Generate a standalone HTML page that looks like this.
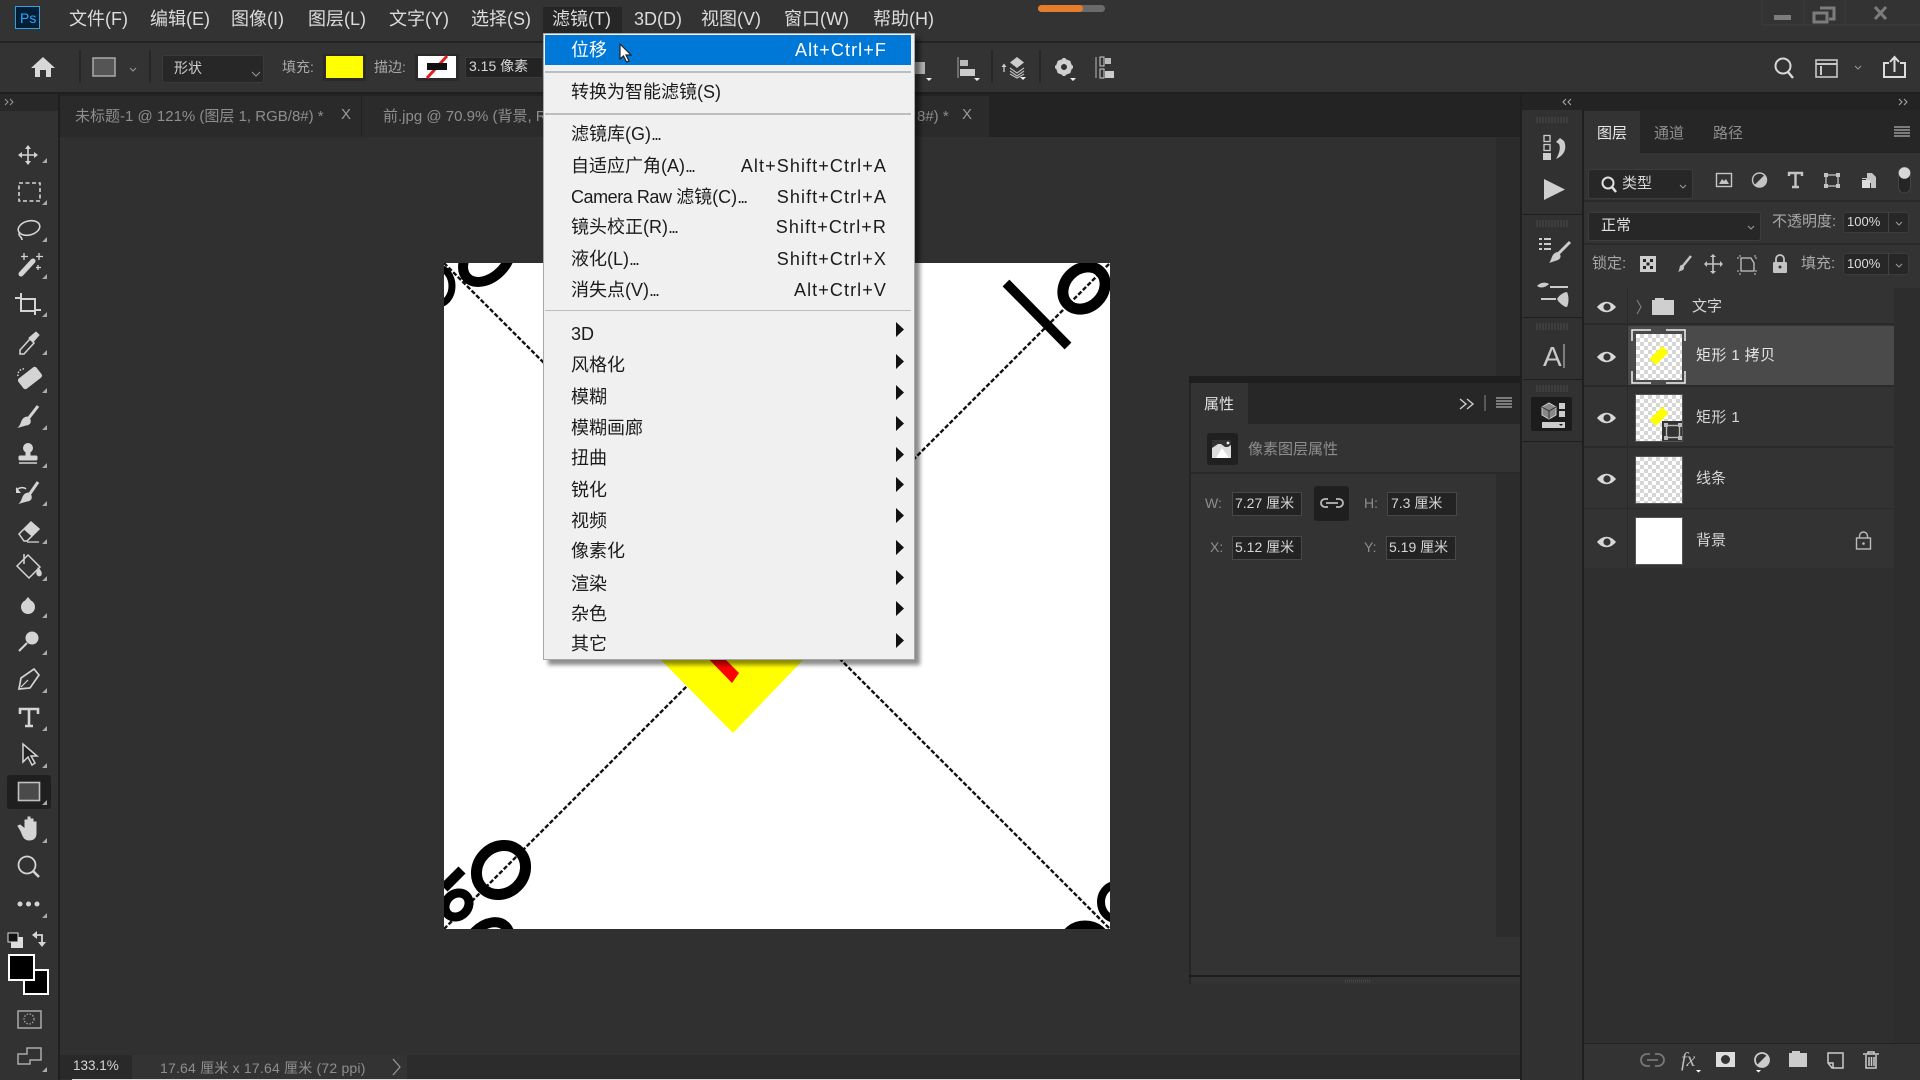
<!DOCTYPE html>
<html lang="zh"><head><meta charset="utf-8"><title>Photoshop</title>
<style>
html,body{margin:0;padding:0;width:1920px;height:1080px;overflow:hidden;background:#303030}
body{position:relative;font-family:"Liberation Sans","Noto Sans CJK SC",sans-serif}
.b,.t,svg{position:absolute}
.t{white-space:nowrap;line-height:24px;height:24px;color:#d6d6d6;font-size:15px}
.t i{font-style:normal;letter-spacing:-2px}
.m{font-size:18px;top:7px;color:#dcdcdc}
.mi{font-size:18px;color:#1b1b1b;left:571px}
.sc{font-size:18px;color:#1b1b1b;right:1033px;letter-spacing:1.1px}
.g{color:#8e8e8e}
.ck{background:repeating-conic-gradient(#d6d6d6 0 25%,#fff 0 50%) 0 0/8px 8px}
.f{background:#232323;border:1px solid #484848;box-sizing:border-box}
.d{background:#272727;border:1px solid #3c3c3c;box-sizing:border-box;border-radius:3px}
</style></head><body>
<!-- base -->
<div class="b" style="left:0;top:0;width:1920px;height:41px;background:#333"></div>
<div class="b" style="left:0;top:41px;width:1920px;height:2px;background:#232323"></div>
<div class="b" style="left:0;top:43px;width:1920px;height:49px;background:#333"></div>
<div class="b" style="left:0;top:92px;width:1920px;height:2px;background:#1f1f1f"></div>
<div class="b" style="left:0;top:94px;width:58px;height:986px;background:#323232"></div>
<div class="b" style="left:0;top:94px;width:58px;height:17px;background:#282828"></div>
<div class="b" style="left:58px;top:94px;width:2px;height:986px;background:#1f1f1f"></div>
<div class="b" style="left:7px;top:775px;width:44px;height:34px;background:#1f1f1f;border-radius:3px"></div>
<!-- tabs -->
<div class="b" style="left:60px;top:94px;width:1460px;height:43px;background:#232323"></div>
<div class="b" style="left:60px;top:96px;width:301px;height:41px;background:#2a2a2a"></div>
<div class="b" style="left:362px;top:96px;width:627px;height:41px;background:#2b2b2b"></div>
<div class="b" style="left:1496px;top:137px;width:24px;height:239px;background:#2b2b2b"></div>
<!-- status bar -->
<div class="b" style="left:60px;top:1055px;width:1460px;height:24px;background:#2c2c2c"></div>
<div class="b" style="left:60px;top:1055px;width:72px;height:24px;background:#292929"></div>
<div class="b" style="left:132px;top:1055px;width:275px;height:24px;background:#333"></div>
<div class="b" style="left:72px;top:1079px;width:1848px;height:1px;background:#ddd"></div>
<span class="t" style="left:73px;top:1054px;font-size:13.500px">133.1%</span>
<span class="t g" style="left:160px;top:1056px;font-size:14px;letter-spacing:.2px">17.64 厘米 x 17.64 厘米 (72 ppi)</span>
<svg style="left:390px;top:1056px" width="14" height="22"><path d="M3 3l7 8-7 8" fill="none" stroke="#999" stroke-width="1.2"/></svg>

<!-- canvas -->
<svg style="left:444px;top:263px" width="666" height="666" viewBox="444 263 666 666">
<rect x="444" y="263" width="666" height="666" fill="#fff"/>
<path d="M444 263L1110 929M444 929L1110 263" stroke="#111" stroke-width="2.4" stroke-dasharray="4.500 2" fill="none"/>
<polygon points="660,659 733,733 804,659 733,590" fill="#ff0"/>
<polygon points="699,649 715,649 739,673 732,683" fill="#f00"/>
<line x1="1006" y1="283" x2="1068" y2="346" stroke="#000" stroke-width="9.500"/>
<ellipse cx="1084" cy="288" rx="23" ry="19" transform="rotate(-45 1084 288)" fill="none" stroke="#000" stroke-width="11"/>
<ellipse cx="501" cy="870" rx="26" ry="23" transform="rotate(-45 501 870)" fill="none" stroke="#000" stroke-width="11"/>
<ellipse cx="457" cy="905" rx="13" ry="11" transform="rotate(-45 457 905)" fill="none" stroke="#000" stroke-width="9"/>
<path d="M444 888L462 870" stroke="#000" stroke-width="10"/>
<ellipse cx="488" cy="944" rx="25" ry="18" transform="rotate(-45 488 944)" fill="none" stroke="#000" stroke-width="10"/>
<ellipse cx="487" cy="258" rx="28" ry="19" transform="rotate(-45 487 258)" fill="none" stroke="#000" stroke-width="10"/>
<ellipse cx="438" cy="286" rx="14" ry="18" fill="none" stroke="#000" stroke-width="7"/>
<ellipse cx="1116" cy="902" rx="15" ry="17" fill="none" stroke="#000" stroke-width="8"/>
<ellipse cx="1085" cy="942" rx="21" ry="17" fill="none" stroke="#000" stroke-width="9"/>
</svg>

<!-- properties panel -->
<div class="b" style="left:1189px;top:376px;width:333px;height:608px;background:#333;border-left:2px solid #252525;box-sizing:border-box"></div>
<div class="b" style="left:1189px;top:376px;width:333px;height:7px;background:#1e1e1e"></div>
<div class="b" style="left:1191px;top:383px;width:330px;height:41px;background:#272727"></div>
<div class="b" style="left:1191px;top:383px;width:57px;height:41px;background:#333"></div>
<span class="t" style="left:1204px;top:393px;color:#e4e4e4">属性</span>
<div class="b" style="left:1207px;top:433px;width:31px;height:32px;background:#202020;border-radius:3px"></div>
<span class="t g" style="left:1248px;top:438px">像素图层属性</span>
<div class="b" style="left:1191px;top:472px;width:330px;height:2px;background:#282828"></div>
<div class="b" style="left:1496px;top:474px;width:25px;height:463px;background:#2c2c2c"></div>
<div class="b" style="left:1189px;top:975px;width:333px;height:2px;background:#1d1d1d"></div>
<span class="t g" style="left:1205px;top:491px;font-size:14px">W:</span>
<div class="b f" style="left:1232px;top:492px;width:70px;height:24px"></div>
<span class="t" style="left:1235px;top:491px;font-size:14px">7.27 厘米</span>
<div class="b" style="left:1314px;top:486px;width:35px;height:35px;background:#1f1f1f;border-radius:3px"></div>
<span class="t g" style="left:1364px;top:491px;font-size:14px">H:</span>
<div class="b f" style="left:1387px;top:492px;width:70px;height:24px"></div>
<span class="t" style="left:1391px;top:491px;font-size:14px">7.3 厘米</span>
<span class="t g" style="left:1210px;top:535px;font-size:14px">X:</span>
<div class="b f" style="left:1232px;top:536px;width:70px;height:24px"></div>
<span class="t" style="left:1235px;top:535px;font-size:14px">5.12 厘米</span>
<span class="t g" style="left:1364px;top:535px;font-size:14px">Y:</span>
<div class="b f" style="left:1386px;top:536px;width:70px;height:24px"></div>
<span class="t" style="left:1389px;top:535px;font-size:14px">5.19 厘米</span>

<!-- right icon column -->
<div class="b" style="left:1522px;top:110px;width:60px;height:970px;background:#313131"></div>
<div class="b" style="left:1520px;top:94px;width:2px;height:986px;background:#1f1f1f"></div>
<div class="b" style="left:1522px;top:94px;width:398px;height:16px;background:#232323"></div>
<div class="b" style="left:1582px;top:110px;width:2px;height:970px;background:#1f1f1f"></div>
<div class="b" style="left:1523px;top:214px;width:59px;height:1px;background:#1f1f1f"></div>
<div class="b" style="left:1523px;top:317px;width:59px;height:1px;background:#1f1f1f"></div>
<div class="b" style="left:1523px;top:379px;width:59px;height:1px;background:#1f1f1f"></div>
<div class="b" style="left:1523px;top:441px;width:59px;height:1px;background:#1f1f1f"></div>
<div class="b" style="left:1531px;top:397px;width:41px;height:34px;background:#1c1c1c;border-radius:2px"></div>

<!-- layers panel -->
<div class="b" style="left:1584px;top:110px;width:336px;height:970px;background:#333"></div>
<div class="b" style="left:1584px;top:110px;width:336px;height:43px;background:#262626"></div>
<div class="b" style="left:1584px;top:111px;width:56px;height:42px;background:#333"></div>
<span class="t" style="left:1597px;top:122px;color:#e8e8e8">图层</span>
<span class="t g" style="left:1654px;top:122px">通道</span>
<span class="t g" style="left:1713px;top:122px">路径</span>
<div class="b d" style="left:1588px;top:169px;width:105px;height:30px"></div>
<span class="t" style="left:1622px;top:172px">类型</span>
<div class="b" style="left:1584px;top:200px;width:336px;height:2px;background:#2a2a2a"></div>
<div class="b d" style="left:1588px;top:212px;width:173px;height:29px"></div>
<span class="t" style="left:1601px;top:214px;color:#e0e0e0">正常</span>
<span class="t" style="left:1772px;top:210px;color:#a8a8a8">不透明度:</span>
<div class="b d" style="left:1843px;top:212px;width:66px;height:21px"></div>
<div class="b" style="left:1888px;top:212px;width:1px;height:21px;background:#444"></div>
<span class="t" style="left:1847px;top:210px;font-size:13px;color:#dcdcdc">100%</span>
<div class="b" style="left:1584px;top:243px;width:336px;height:2px;background:#2a2a2a"></div>
<span class="t" style="left:1592px;top:252px;color:#a8a8a8">锁定:</span>
<span class="t" style="left:1801px;top:252px;color:#a8a8a8">填充:</span>
<div class="b d" style="left:1843px;top:253px;width:66px;height:22px"></div>
<div class="b" style="left:1888px;top:253px;width:1px;height:22px;background:#444"></div>
<span class="t" style="left:1847px;top:252px;font-size:13px;color:#dcdcdc">100%</span>

<div class="b" style="left:1894px;top:288px;width:26px;height:755px;background:#2d2d2d"></div>
<div class="b" style="left:1584px;top:568px;width:310px;height:475px;background:#2f2f2f"></div>
<div class="b" style="left:1584px;top:1043px;width:336px;height:1px;background:#232323"></div>
<div class="b" style="left:1627px;top:288px;width:1px;height:280px;background:#292929"></div>
<div class="b" style="left:1584px;top:323px;width:310px;height:2px;background:#2a2a2a"></div>
<div class="b" style="left:1628px;top:326px;width:266px;height:59px;background:#4a4a4a"></div>
<div class="b" style="left:1584px;top:385px;width:310px;height:2px;background:#2a2a2a"></div>
<div class="b" style="left:1584px;top:446px;width:310px;height:2px;background:#2a2a2a"></div>
<div class="b" style="left:1584px;top:508px;width:310px;height:1px;background:#2a2a2a"></div>

<span class="t" style="left:1692px;top:295px">文字</span>
<div class="b ck" style="left:1636px;top:334px;width:46px;height:46px"></div>
<div class="b ck" style="left:1636px;top:395px;width:46px;height:46px;outline:1px solid #555"></div>
<div class="b ck" style="left:1636px;top:457px;width:46px;height:46px;outline:1px solid #555"></div>
<div class="b" style="left:1636px;top:518px;width:46px;height:46px;background:#fff;outline:1px solid #555"></div>
<div class="b" style="left:1650px;top:351px;width:18px;height:9px;background:#ff0;transform:rotate(-45deg)"></div>
<div class="b" style="left:1650px;top:412px;width:18px;height:9px;background:#ff0;transform:rotate(-45deg)"></div>
<div class="b" style="left:1662px;top:421px;width:20px;height:20px;background:#333"></div>
<span class="t" style="left:1696px;top:344px;color:#e4e4e4;letter-spacing:.4px">矩形 1 拷贝</span>
<span class="t" style="left:1696px;top:406px;letter-spacing:.4px">矩形 1</span>
<span class="t" style="left:1696px;top:467px">线条</span>
<span class="t" style="left:1696px;top:529px">背景</span>

<!-- menu bar text -->
<div class="b" style="left:543px;top:7px;width:79px;height:26px;background:#262626"></div>
<span class="t m" style="left:69px">文件(F)</span>
<span class="t m" style="left:150px">编辑(E)</span>
<span class="t m" style="left:231px">图像(I)</span>
<span class="t m" style="left:308px">图层(L)</span>
<span class="t m" style="left:389px">文字(Y)</span>
<span class="t m" style="left:471px">选择(S)</span>
<span class="t m" style="left:552px">滤镜(T)</span>
<span class="t m" style="left:634px">3D(D)</span>
<span class="t m" style="left:701px">视图(V)</span>
<span class="t m" style="left:784px">窗口(W)</span>
<span class="t m" style="left:873px">帮助(H)</span>

<!-- progress pill -->
<div class="b" style="left:1038px;top:5px;width:67px;height:7px;background:#6a6a6a;border-radius:4px"></div>
<div class="b" style="left:1038px;top:5px;width:45px;height:7px;background:#e57e2c;border-radius:4px"></div>

<!-- Ps logo -->
<div class="b" style="left:15px;top:6px;width:25px;height:23px;background:#001e36;border:1.500px solid #2fa3e0;box-sizing:border-box"></div>
<span class="t" style="left:20px;top:6px;font-size:14px;color:#31a8ff;letter-spacing:0">Ps</span>

<!-- options bar -->
<div class="b" style="left:162px;top:55px;width:102px;height:28px;background:#272727;border-radius:3px;border:1px solid #3a3a3a;box-sizing:border-box"></div>
<span class="t" style="left:174px;top:56px;font-size:14px;color:#cfcfcf">形状</span>
<span class="t" style="left:282px;top:55px;color:#a8a8a8;font-size:14px">填充:</span>
<div class="b" style="left:323px;top:54px;width:43px;height:27px;background:#2a2a2a"></div>
<div class="b" style="left:326px;top:56px;width:37px;height:22px;background:#ff0"></div>
<span class="t" style="left:374px;top:55px;color:#a8a8a8;font-size:14px">描边:</span>
<div class="b" style="left:415px;top:54px;width:44px;height:27px;background:#2a2a2a"></div>
<div class="b" style="left:418px;top:56px;width:38px;height:22px;background:#fff"></div>
<div class="b f" style="left:465px;top:57px;width:78px;height:21px;border-color:#3a3a3a"></div>
<span class="t" style="left:469px;top:54px;font-size:14px;color:#d8d8d8">3.15 像素</span>

<!-- tab text -->
<span class="t g" style="left:75px;top:105px;font-size:15px">未标题-1 @ 121% (图层 1, RGB/8#) *</span>
<span class="t" style="left:341px;top:103px;font-size:15px;color:#9a9a9a">X</span>
<span class="t g" style="left:383px;top:105px;font-size:15px">前.jpg @ 70.9% (背景, R</span>
<span class="t g" style="left:917px;top:105px;font-size:15px">8#) *</span>
<span class="t" style="left:962px;top:103px;font-size:15px;color:#9a9a9a">X</span>

<!-- ICONS -->
<svg style="left:0;top:0" width="1920" height="1080" viewBox="0 0 1920 1080" fill="none">
<!-- window controls -->
<path d="M1762 25H1920M1762 0V25M1804 0V25M1845 0V25" stroke="#3c3c3c"/>
<rect x="1774" y="15" width="17" height="5" fill="#7c7c7c"/>
<path d="M1820 8h14v11h-5M1814 13h13v9h-13z" stroke="#7c7c7c" stroke-width="3"/>
<path d="M1875 7l11 12M1886 7l-11 12" stroke="#7c7c7c" stroke-width="3"/>
<!-- top-left chevrons -->
<path d="M5 99l3 3-3 3M10 99l3 3-3 3" stroke="#999"/>
<path d="M1566 99l-3 3 3 3M1571 99l-3 3 3 3M1899 99l3 3-3 3M1904 99l3 3-3 3" stroke="#aaa"/>
<!-- options bar separators -->
<path d="M80 50V83M150 50V83M992 50V83M1040 50V83" stroke="#272727" stroke-width="2"/>
<path d="M43 57L31 68h4v9h5v-7h6v7h5v-9h4z" fill="#d8d8d8"/>
<rect x="93" y="58" width="22" height="18" fill="#555" stroke="#aaa" stroke-width="1.500"/>
<path d="M130 68l3 3 3-3M252 72l4 4 4-4" stroke="#999"/>
<path d="M427 78L447 56" stroke="#d22" stroke-width="3"/>
<rect x="427" y="63" width="20" height="7" fill="#111"/>
<rect x="912" y="62" width="13" height="12" fill="#b0b0b0"/>
<path d="M926 78h6l-3 3z" fill="#eee"/>
<path d="M958 57v21" stroke="#aaa"/>
<rect x="960" y="60" width="8" height="6" fill="#bbb"/>
<rect x="960" y="69" width="15" height="7" fill="#ccc"/>
<path d="M974 78h6l-3 3zM1020 77h6l-3 3zM1070 78h6l-3 3z" fill="#eee"/>
<path d="M1017 57l7 5.500-7 5.500-7-5.500z" fill="#ccc"/>
<path d="M1010 68l7 5 7-5M1010 71l7 5 7-5M1010 74l7 4 7-4" stroke="#bbb" stroke-width="1.200"/>
<path d="M1004 72v-7" stroke="#ccc" stroke-width="1.300"/><path d="M1001.500 67l2.500-3.500 2.500 3.500z" fill="#ccc"/>
<circle cx="1064" cy="67" r="5.500" stroke="#d0d0d0" stroke-width="5"/>
<path d="M1064 58v4M1064 72v4M1055 67h4M1069 67h4M1058 61l2.500 2.500M1067.500 70.500l2.500 2.500M1070 61l-2.500 2.500M1060.500 70.500l-2.500 2.500" stroke="#d0d0d0" stroke-width="3"/>
<path d="M1096 57v21" stroke="#bbb"/>
<rect x="1100" y="57" width="4" height="9" stroke="#ccc"/><rect x="1100" y="69" width="4" height="9" stroke="#ccc"/>
<rect x="1105" y="58" width="6" height="6" fill="#bbb"/><rect x="1105" y="71" width="9" height="7" fill="#ccc"/>
<circle cx="1783" cy="66" r="7.500" stroke="#d8d8d8" stroke-width="2"/><path d="M1788 72l5 6" stroke="#d8d8d8" stroke-width="2.400"/>
<rect x="1816" y="60" width="21" height="17" stroke="#c8c8c8" stroke-width="1.600"/><path d="M1816 64h21" stroke="#c8c8c8" stroke-width="2"/><path d="M1821 66v9" stroke="#c8c8c8" stroke-width="2"/>
<path d="M1855 66l3 3 3-3" stroke="#999"/>
<path d="M1889 63h-5v14h21V63h-5M1894.500 72V58M1890 62l4.500-5 4.500 5" stroke="#dcdcdc" stroke-width="2"/>

<!-- tools -->
<g stroke="#d4d4d4" fill="#d4d4d4">
<path d="M28 146v18M19 155h18" stroke-width="1.600"/>
<path d="M28 145l-3 4h6zM28 165l-3-4h6zM18 155l4-3v6zM38 155l-4-3v6z" stroke="none"/>
<rect x="19" y="183" width="21" height="18" fill="none" stroke-width="1.600" stroke-dasharray="4 2.500"/>
<ellipse cx="29" cy="228" rx="11" ry="7" transform="rotate(-15 29 228)" fill="none" stroke-width="1.600"/>
<path d="M20 232c-3 4 2 4 2 8" fill="none" stroke-width="1.600"/>
<path d="M21 274L33 261" stroke-width="5" stroke-linecap="round"/>
<path d="M24 253v7M21 256.500h7M39 253v7M36 256.500h7M38 265v5M36 267.500h5" stroke-width="1.300"/>
<path d="M15 298h6M21 293v18h14M21 299h14v16M35 310h6" fill="none" stroke-width="2"/>
<path d="M20 350l10-11 4 4-10 11h-4z" fill="none" stroke-width="1.500"/>
<path d="M29 338l7-6 3 3-6 7z"/>
<rect x="19" y="372" width="22" height="12" rx="2" transform="rotate(-38 30 378)"/>
<path d="M18 376a6 6 0 0 1 7-7" fill="none" stroke-width="1.500" stroke-dasharray="1.500 1.500"/>
<path d="M38 406L28 419" stroke-width="3" /><path d="M27 417c5 2 4 8-1 8l-7 2c3-3 2-9 8-10z"/>
<circle cx="28" cy="448" r="4.500"/><rect x="26" y="451" width="4" height="5"/><rect x="19" y="456" width="18" height="4" rx="1"/><path d="M19 463h18" stroke-width="1.500"/>
<path d="M38 482L29 495" stroke-width="3"/><path d="M28 493c5 2 4 8-1 8l-7 2c3-3 2-9 8-10z"/><path d="M16 490c4-3 8-3 10-1" fill="none" stroke-width="1.500"/><path d="M16 487v6h5z" stroke="none"/>
<path d="M19 534l12-12 8 7-12 12h-3z" fill="none" stroke-width="1.500"/><path d="M24 529l7-7 8 7-7 7z"/><path d="M27 542h12" stroke-width="1.300"/>
<g transform="translate(0 5)"><path d="M17 561l11-11 12 12-11 11z" fill="none" stroke-width="1.500"/><path d="M24 549v10" stroke-width="1.500"/><path d="M38 563c3 3 4 5 3 7-2 2-5 0-4-3z"/></g>
<path d="M28 600c-4 0-7 3-7 7a7 7 0 0 0 14 0c0-4-3-7-7-7z" stroke="none"/>
<path d="M28 597l-5 6h10z" stroke="none"/>
<circle cx="32" cy="638" r="6.500" stroke="none"/><path d="M27 643l-8 8" stroke-width="2" />
<path d="M19 689l2-11 13-9 5 6-9 13z" fill="none" stroke-width="1.700"/><path d="M21 687l7-7" stroke-width="1.200"/>
<path d="M20 714v-5h18v5M29 709v17M25 726h8" fill="none" stroke-width="2.600"/>
<path d="M23 744v18l5-5 4 8 3-2-4-7h6z" fill="#222" stroke-width="1.500"/>
<rect x="18.500" y="782.500" width="21" height="18" fill="#4a4a4a" stroke="#c0c0c0" stroke-width="1.600"/>
<path d="M21 831l-3-5 2-1 5 4v-9h2v7h1v-10h2v10h1v-8h2v9h1v-6h2v11c0 5-3 7-7 7-5 0-6-4-8-9z"/>
<circle cx="27" cy="865" r="8.500" fill="none" stroke-width="1.800"/><path d="M33 871l6 6" stroke-width="2.600"/>
<circle cx="20" cy="904" r="2.500" stroke="none"/><circle cx="28.500" cy="904" r="2.500" stroke="none"/><circle cx="37" cy="904" r="2.500" stroke="none"/>
<path d="M33 935h9v8" fill="none" stroke-width="1.800"/><path d="M37 931l-5 4 5 4zM38 942l4 5 4-5z" stroke="none"/>
<rect x="18" y="1011" width="23" height="17" fill="none" stroke="#aaa" stroke-width="1.500"/><circle cx="29" cy="1019" r="5" fill="none" stroke="#aaa" stroke-dasharray="1.500 1.500" stroke-width="1.200"/>
<path d="M18 1054h9v-6h14v12h-11v4H18z" fill="none" stroke="#aaa" stroke-width="1.500"/>
</g>
<!-- tool corner marks -->
<path d="M47 163v-5l-5 5zM47 205v-5l-5 5zM47 242v-5l-5 5zM47 279v-5l-5 5zM47 317v-5l-5 5zM47 355v-5l-5 5zM47 393v-5l-5 5zM47 430v-5l-5 5zM47 468v-5l-5 5zM47 506v-5l-5 5zM47 544v-5l-5 5zM47 581v-5l-5 5zM47 618v-5l-5 5zM47 655v-5l-5 5zM47 693v-5l-5 5zM47 731v-5l-5 5zM47 768v-5l-5 5zM47 805v-5l-5 5zM47 843v-5l-5 5zM47 918v-5l-5 5zM47 1072v-5l-5 5z" fill="#aaa"/>
<!-- swatches -->
<rect x="11" y="937" width="12" height="11" fill="#ddd"/>
<rect x="8" y="933" width="10" height="9" fill="#111" stroke="#ddd"/>
<rect x="24" y="970" width="24" height="24" fill="#000" stroke="#fff" stroke-width="2"/>
<rect x="9" y="955" width="25" height="25" fill="#000" stroke="#fff" stroke-width="2"/>

<!-- right column icons -->
<g stroke="#4a4a4a"><path d="M1537 117v6M1540 117v6M1543 117v6M1546 117v6M1549 117v6M1552 117v6M1555 117v6M1558 117v6M1561 117v6M1564 117v6M1567 117v6M1537 220v7M1540 220v7M1543 220v7M1546 220v7M1549 220v7M1552 220v7M1555 220v7M1558 220v7M1561 220v7M1564 220v7M1567 220v7M1537 323v7M1540 323v7M1543 323v7M1546 323v7M1549 323v7M1552 323v7M1555 323v7M1558 323v7M1561 323v7M1564 323v7M1567 323v7M1537 385v7M1540 385v7M1543 385v7M1546 385v7M1549 385v7M1552 385v7M1555 385v7M1558 385v7M1561 385v7M1564 385v7M1567 385v7"/></g>
<rect x="1544" y="135.500" width="6" height="6" stroke="#ccc" stroke-width="1.300"/><rect x="1544" y="144.500" width="6" height="6" stroke="#ccc" stroke-width="1.300"/><rect x="1543" y="153" width="8" height="7" fill="#ccc"/>
<path d="M1556 142l4-4 4 3c3 7 1 14-8 18 3-5 5-11 3-15z" fill="#ccc"/>
<path d="M1544 179v21l21-10.500z" fill="#cfcfcf"/>
<path d="M1539 239h3M1539 244h3M1539 249h3M1544 239h7M1544 244h7M1544 249h7" stroke="#ccc" stroke-width="2"/>
<path d="M1570 242l-12 12" stroke="#ccc" stroke-width="3"/><path d="M1557 252c4 1 5 6 1 8l-9 3c3-3 2-9 8-11z" fill="#ccc"/>
<path d="M1537 286c4-4 9-4 12-2h1l-1 0c-3 3-8 5-12 2z" fill="#ccc"/><path d="M1550 287h18M1541 299h15" stroke="#ccc" stroke-width="2"/><path d="M1557 299c3-5 8-7 10-7 2 4 2 11 0 15-3 0-8-4-10-8z" fill="#ccc"/>
<text x="1543" y="366" font-family="Liberation Sans" font-size="28" fill="#c8c8c8">A</text><path d="M1564 344v24" stroke="#ccc"/>
<path d="M1542 407l7-4 7 4v8l-7 4-7-4z" fill="#888" stroke="#ccc"/>
<path d="M1542 407l7 4 7-4M1549 411v8" stroke="#333"/>
<rect x="1559" y="403" width="6" height="6" fill="#ccc"/><rect x="1559" y="411" width="6" height="6" fill="#ccc"/>
<rect x="1542" y="422" width="23" height="6" fill="#ccc"/><path d="M1559 424h4l-2 2z" fill="#111"/>

<!-- properties icons -->
<path d="M1460 399l6 5-6 5M1467 399l6 5-6 5" stroke="#ccc" stroke-width="1.400"/>
<path d="M1485 395v16" stroke="#888"/>
<path d="M1496 398h16M1496 401h16M1496 404h16M1496 407h16" stroke="#999" stroke-width="1.500"/>
<rect x="1212" y="440" width="19" height="18" fill="#ddd"/><path d="M1212 440h19v5l-3 2h-3l-4-3-3 0-6 4z" fill="#333"/><path d="M1216 458l6-10 7 10z" fill="#fff"/>
<circle cx="1228" cy="443" r="1.400" fill="#eee"/>
<path d="M1328 499h-3a4 4 0 0 0 0 8h3M1336 499h3a4 4 0 0 1 0 8h-3M1326 503h12" stroke="#bbb" stroke-width="1.800"/>
<path d="M1345 981h26" stroke="#444" stroke-dasharray="1 1" stroke-width="3"/>

<!-- layers panel icons -->
<path d="M1894 127h16M1894 130h16M1894 133h16M1894 136h16" stroke="#999" stroke-width="1.500"/>
<circle cx="1608" cy="183" r="5.500" stroke="#e0e0e0" stroke-width="2"/><path d="M1612 187l4 5" stroke="#e0e0e0" stroke-width="2.500"/>
<path d="M1680 185l3 3 3-3M1748 226l3 3 3-3M1896 222l3 3 3-3M1896 264l3 3 3-3" stroke="#999" stroke-width="1.100"/>
<rect x="1716.500" y="173.500" width="15" height="13" stroke="#c4c4c4" stroke-width="1.400"/><path d="M1719 184l3-5 2 2 2-2 3 5z" fill="#c4c4c4"/>
<circle cx="1759.500" cy="180" r="7" stroke="#c4c4c4" stroke-width="1.400"/><path d="M1764.500 175a7 7 0 0 1-10 10z" fill="#c4c4c4"/>
<path d="M1789 176v-3h13v3M1795.500 173v14M1792 187h7" stroke="#c4c4c4" stroke-width="2.400"/>
<rect x="1826" y="175" width="12" height="11" stroke="#c4c4c4" stroke-width="1.300"/>
<path d="M1824 173h4v4h-4zM1836 173h4v4h-4zM1824 184h4v4h-4zM1836 184h4v4h-4z" fill="#c4c4c4"/>
<path d="M1867 173h5l4 4v11h-5v-5h-5v-4h-4v-1h5z" fill="#c4c4c4"/><rect x="1862" y="180" width="8" height="8" fill="#ddd"/>
<rect x="1898.500" y="167" width="12" height="26" rx="6" fill="#252525" stroke="#444"/><circle cx="1904.500" cy="173" r="5.800" fill="#d8d8d8"/>
<!-- lock row -->
<rect x="1640" y="256" width="16" height="16" fill="#ccc"/><path d="M1643 259h3v3h-3zM1650 259h3v3h-3zM1646.500 262.500h3v3h-3zM1643 266h3v3h-3zM1650 266h3v3h-3z" fill="#222"/>
<path d="M1691 256l-9 11" stroke="#c4c4c4" stroke-width="2.500"/><path d="M1681 265c3 0 4 3 2 5l-5 2c2-2 1-6 3-7z" fill="#c4c4c4"/>
<path d="M1713 256v16M1705 264h17" stroke="#c4c4c4" stroke-width="1.600"/><path d="M1713 254l-3 3h6zM1713 274l-3-3h6zM1704 264l3-3v6zM1723 264l-3-3v6z" fill="#c4c4c4"/>
<path d="M1741 258h10l3 5v8h-13z" stroke="#c4c4c4" stroke-width="1.300"/><path d="M1737 258h2M1755 258h2M1737 271h2M1755 271h2M1740 255v2M1740 273v2M1755 255v2M1755 273v2" stroke="#c4c4c4"/>
<rect x="1773" y="262" width="14" height="11" rx="1" fill="#c4c4c4"/><path d="M1776 262v-3a4 4 0 0 1 8 0v3" stroke="#c4c4c4" stroke-width="1.800"/><circle cx="1780" cy="267" r="1.500" fill="#333"/>
<!-- eyes -->
<g><path d="M1597 307c6-7 13-7 19 0-6 7-13 7-19 0zM1597 357c6-7 13-7 19 0-6 7-13 7-19 0zM1597 418c6-7 13-7 19 0-6 7-13 7-19 0zM1597 479c6-7 13-7 19 0-6 7-13 7-19 0zM1597 542c6-7 13-7 19 0-6 7-13 7-19 0z" fill="#d8d8d8"/>
<circle cx="1607" cy="307" r="3.600" fill="#333"/><circle cx="1607" cy="357" r="3.600" fill="#333"/><circle cx="1607" cy="418" r="3.600" fill="#333"/><circle cx="1607" cy="479" r="3.600" fill="#333"/><circle cx="1607" cy="542" r="3.600" fill="#333"/></g>
<path d="M1637 300l4 7-4 7" stroke="#888"/>
<path d="M1652 315v-15h3v-2h9v2h10v15z" fill="#cfcfcf"/>
<path d="M1632 341v-11h19M1666 330h19v11M1685 371v12h-19M1651 383h-19v-12" stroke="#f2f2f2" stroke-width="1.500"/>
<rect x="1666.500" y="425.500" width="13" height="12" stroke="#bbb" stroke-width="1.400"/><path d="M1664 423h4v4h-4zM1678 423h4v4h-4zM1664 436h4v4h-4zM1678 436h4v4h-4z" fill="#bbb"/>
<rect x="1856.500" y="538" width="14" height="11" stroke="#bbb" stroke-width="1.400"/><path d="M1859.500 538v-2a4 4 0 0 1 8 0v2" stroke="#bbb" stroke-width="1.400"/><circle cx="1863.500" cy="543.500" r="1.300" fill="#bbb"/>
<!-- bottom bar -->
<path d="M1650 1054h-3a6 6 0 0 0 0 12h3M1655 1054h3a6 6 0 0 1 0 12h-3M1647 1060h11" stroke="#777" stroke-width="1.800"/>
<rect x="1716" y="1052" width="19" height="15" fill="#ddd"/><circle cx="1725.500" cy="1059.500" r="4.500" fill="#333"/>
<circle cx="1762" cy="1060" r="7" stroke="#ccc" stroke-width="1.800"/><path d="M1767 1055a7 7 0 0 1-10 10z" fill="#ccc"/>
<path d="M1756 1070h5l-2.500 2.500zM1696 1070h5l-2.500 2.500z" fill="#fff"/>
<path d="M1789 1067v-14h3v-2h8v2h7v14z" fill="#ccc"/>
<path d="M1828 1053h15v15h-11l-4-5zM1828 1063h5v5" stroke="#ccc" stroke-width="1.500"/>
<path d="M1866 1055v13h10v-13M1863 1054h16M1868 1054v-2h6v2M1869 1057v9M1871.500 1057v9M1874 1057v9" stroke="#ccc" stroke-width="1.500"/>
</svg>
<span class="t" style="left:1681px;top:1048px;font-family:'Liberation Serif',serif;font-style:italic;font-size:20px;color:#bdbdbd">fx</span>

<!-- filter menu -->
<div class="b" style="left:543px;top:33px;width:372px;height:627px;background:#f0f0f1;border:1px solid #a8a8a8;box-sizing:border-box;box-shadow:5px 5px 4px rgba(0,0,0,.45)"></div>
<div class="b" style="left:545px;top:35px;width:366px;height:30px;background:#0078d7"></div>
<div class="b" style="left:545px;top:71px;width:366px;height:2px;background:#bdbdbd"></div>
<div class="b" style="left:545px;top:113px;width:366px;height:2px;background:#bdbdbd"></div>
<div class="b" style="left:545px;top:310px;width:366px;height:1px;background:#bdbdbd"></div>
<span class="t mi" style="top:38px;color:#fff">位移</span><span class="t sc" style="top:38px;color:#fff">Alt+Ctrl+F</span>
<span class="t mi" style="top:80px">转换为智能滤镜(S)</span>
<span class="t mi" style="top:122px">滤镜库(G)<i>...</i></span>
<span class="t mi" style="top:154px">自适应广角(A)<i>...</i></span><span class="t sc" style="top:154px">Alt+Shift+Ctrl+A</span>
<span class="t mi" style="top:185px"><span style="letter-spacing:-.45px">Camera Raw </span>滤镜(C)<i>...</i></span><span class="t sc" style="top:185px">Shift+Ctrl+A</span>
<span class="t mi" style="top:215px">镜头校正(R)<i>...</i></span><span class="t sc" style="top:215px">Shift+Ctrl+R</span>
<span class="t mi" style="top:247px">液化(L)<i>...</i></span><span class="t sc" style="top:247px">Shift+Ctrl+X</span>
<span class="t mi" style="top:278px">消失点(V)<i>...</i></span><span class="t sc" style="top:278px">Alt+Ctrl+V</span>
<span class="t mi" style="top:322px">3D</span>
<span class="t mi" style="top:353px">风格化</span>
<span class="t mi" style="top:385px">模糊</span>
<span class="t mi" style="top:416px">模糊画廊</span>
<span class="t mi" style="top:446px">扭曲</span>
<span class="t mi" style="top:478px">锐化</span>
<span class="t mi" style="top:509px">视频</span>
<span class="t mi" style="top:539px">像素化</span>
<span class="t mi" style="top:572px">渲染</span>
<span class="t mi" style="top:602px">杂色</span>
<span class="t mi" style="top:632px">其它</span>
<svg style="left:890px;top:320px" width="20" height="330" viewBox="890 320 20 330"><path d="M896 322v15l8-7.500zM896 354v15l8-7.500zM896 385v15l8-7.500zM896 416v15l8-7.500zM896 447v15l8-7.500zM896 477v15l8-7.500zM896 508v15l8-7.500zM896 540v15l8-7.500zM896 570v15l8-7.500zM896 601v15l8-7.500zM896 633v15l8-7.500z" fill="#111"/></svg>
<svg style="left:615px;top:40px" width="22" height="26" viewBox="615 40 22 26"><path d="M620 44v15l3.500-3 3 6 2.500-1-3-6h5z" fill="#fff" stroke="#222" stroke-width="1.200"/></svg>
</body></html>
